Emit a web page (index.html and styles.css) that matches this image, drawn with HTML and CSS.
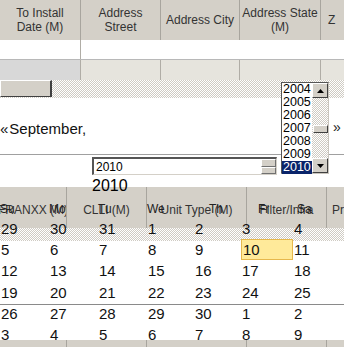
FILE: index.html
```html
<!DOCTYPE html>
<html>
<head>
<meta charset="utf-8">
<link rel="stylesheet" href="styles.css">
</head>
<body>
<div class="page">
  <div class="g1-head">
    <div class="hc c1">To Install<br>Date (M)</div>
    <div class="hc c2">Address<br>Street</div>
    <div class="hc c3">Address City</div>
    <div class="hc c4">Address State<br>(M)</div>
    <div class="hc c5 left">Z</div>
  </div>
  <div class="g1-row white">
    <div class="rc c1 bordered"></div>
    <div class="rc c2"></div>
    <div class="rc c3"></div>
    <div class="rc c4"></div>
    <div class="rc c5"></div>
  </div>
  <div class="g1-row grey">
    <div class="rc c1 first"></div>
    <div class="rc c2 bordered"></div>
    <div class="rc c3 bordered"></div>
    <div class="rc c4 bordered"></div>
    <div class="rc c5"></div>
  </div>
  <div class="hscroll"><div class="thumb"></div></div>

  <div class="cal-head"><span class="nav">«</span>September,</div>

  <div class="year-line">
    <div class="year-input">
      <span>2010</span>
      <div class="spin"><div class="sb"></div><div class="sb"></div></div>
    </div>
  </div>

  <div class="g2">
    <div class="g2-head">
      <div class="h2 k1">FRANXX (M)</div>
      <div class="h2 k2">CLLI (M)</div>
      <div class="h2 k3">Unit Type (M)</div>
      <div class="h2 k4">Filter/Infra</div>
      <div class="h2 k5 left">Pr</div>
    </div>
    <div class="hatch g2-hatch"></div>
    <div class="g2-body"><div class="g2-row"></div></div>
    <div class="g2-foot">
      <div class="f k1"></div><div class="f k2"></div><div class="f k3"></div><div class="f k4"></div><div class="f k5"></div>
    </div>

    <div class="cal">
      <div class="cap">2010</div>
      <div class="days">
        <div class="dn">Su</div><div class="dn">Mo</div><div class="dn">Tu</div><div class="dn">We</div><div class="dn">Th</div><div class="dn">Fr</div><div class="dn">Sa</div>
      </div>
      <div class="nums">
        <div>29</div><div>30</div><div>31</div><div>1</div><div>2</div><div>3</div><div>4</div>
        <div>5</div><div>6</div><div>7</div><div>8</div><div>9</div><div class="today">10</div><div>11</div>
        <div>12</div><div>13</div><div>14</div><div>15</div><div>16</div><div>17</div><div>18</div>
        <div>19</div><div>20</div><div>21</div><div>22</div><div>23</div><div>24</div><div>25</div>
        <div>26</div><div>27</div><div>28</div><div>29</div><div>30</div><div>1</div><div>2</div>
        <div>3</div><div>4</div><div>5</div><div>6</div><div>7</div><div>8</div><div>9</div>
      </div>
    </div>
  </div>

  <div class="listbox">
    <div class="items">
      <div>2004</div><div>2005</div><div>2006</div><div>2007</div><div>2008</div><div>2009</div><div class="sel">2010</div>
    </div>
    <div class="lscroll">
      <div class="btn"><svg width="7" height="4" viewBox="0 0 7 4"><polygon points="0,4 7,4 3.5,0" fill="#000"/></svg></div>
      <div class="track hatch"><div class="lthumb"></div></div>
      <div class="btn"><svg width="7" height="4" viewBox="0 0 7 4"><polygon points="0,0 7,0 3.5,4" fill="#000"/></svg></div>
    </div>
  </div>
  <div class="next">»</div>
</div>
</body>
</html>
```

FILE: styles.css
```css
* { box-sizing: border-box; }
body {
  margin: 0;
  width: 344px;
  height: 347px;
  overflow: hidden;
  background: #fff;
  font-family: "Liberation Sans", Arial, sans-serif;
  color: #000;
}
.page {
  position: relative;
  width: 344px;
  height: 347px;
  overflow: hidden;
}
.hatch {
  background-color: #fff;
  background-image: repeating-conic-gradient(#cfcbc3 0% 25%, #ffffff 0% 50%);
  background-size: 2px 2px;
}

/* top grid */
.g1-head {
  display: flex;
  height: 40px;
  background: #d4d0c8;
}
.c1 { width: 81px; }
.c2 { width: 80px; }
.c3 { width: 79px; }
.c4 { width: 81px; }
.c5 { flex: 1; }
.hc {
  flex-shrink: 0;
  display: flex;
  align-items: center;
  justify-content: center;
  text-align: center;
  font-size: 12px;
  line-height: 14px;
  color: #333;
  border-right: 1px solid #a8a59e;
  white-space: nowrap;
  overflow: hidden;
}
.hc.c5 { border-right: none; }
.left { justify-content: flex-start; padding-left: 7px; }
.g1-row {
  display: flex;
  height: 20px;
}
.g1-row.white { background: #fff; border-bottom: 1px solid #b8b8b8; }
.g1-row.grey { background: #e6e4dd; }
.rc { flex-shrink: 0; height: 100%; }
.rc.bordered { border-right: 1px solid #b0ada6; }
.rc.first { background: #d8d8d8; border-right: 1px solid #b0ada6; }

.hscroll {
  height: 18px;
  background-color: #fff;
  background-image: repeating-conic-gradient(#cfcbc3 0% 25%, #ffffff 0% 50%);
  background-size: 2px 2px;
}
.thumb {
  width: 52px;
  height: 17px;
  background: #d4d0c8;
  border-top: 1px solid #fff;
  border-left: 1px solid #fff;
  border-right: 2px solid #404040;
  border-bottom: 1px solid #404040;
}

/* calendar title */
.cal-head {
  height: 57px;
  padding-top: 22px;
  font-size: 15px;
  line-height: 18px;
  border-bottom: 1px solid #a0a0a0;
  color: #111;
}
.nav { margin-right: 1px; }
.year-line {
  padding-left: 92px;
  margin-top: 2px;
}
.year-input {
  width: 185px;
  height: 18px;
  border-top: 2px solid #555;
  border-left: 2px solid #555;
  border-right: 1px solid #d4d0c8;
  border-bottom: 1px solid #d4d0c8;
  display: flex;
  align-items: center;
  justify-content: space-between;
  font-size: 12px;
  padding-left: 2px;
  background: #fff;
}
.spin {
  display: flex;
  flex-direction: column;
  width: 15px;
  height: 15px;
}
.sb {
  flex: 1;
  background: #d4d0c8;
  border-top: 1px solid #fff;
  border-left: 1px solid #fff;
  border-right: 1px solid #707070;
  border-bottom: 1px solid #707070;
}

/* second grid */
.g2 {
  position: relative;
  margin-top: 12px;
}
.g2-head {
  display: flex;
  height: 41px;
  background: #d4d0c8;
}
.k1 { width: 67px; }
.k2 { width: 80px; }
.k3 { width: 100px; }
.k4 { width: 80px; }
.k5 { flex: 1; }
.h2 {
  flex-shrink: 0;
  display: flex;
  align-items: center;
  justify-content: center;
  font-size: 12px;
  color: #333;
  border-right: 1px solid #a8a59e;
  white-space: nowrap;
  overflow: hidden;
  padding-top: 4px;
}
.h2.k5 { border-right: none; padding-left: 5px; }
.g2-hatch { height: 13px; }
.g2-body { height: 99px; background: #fff; }
.g2-row { height: 64px; border-bottom: 1px solid #8a8a8a; }
.g2-foot {
  display: flex;
  height: 7px;
  background: #d4d0c8;
}
.f { flex-shrink: 0; height: 100%; border-right: 1px solid #a8a59e; }
.f.k5 { border-right: none; }

/* calendar overlay */
.cal {
  position: absolute;
  left: 0;
  top: -10px;
  width: 344px;
}
.cap {
  height: 18px;
  padding-left: 92px;
  font-size: 16px;
  line-height: 18px;
}
.days, .nums {
  display: grid;
  grid-template-columns: 49px 49px 49px 47px 47px 52px 51px;
}
.days {
  margin-top: 5px;
  height: 18px;
  font-size: 12px;
  line-height: 18px;
  color: #222;
}
.dn:nth-child(5) { padding-left: 15px; }
.dn:nth-child(6) { padding-left: 17px; }
.dn:nth-child(7) { padding-left: 4px; }
.nums {
  grid-auto-rows: 21.2px;
  font-size: 15px;
  line-height: 21px;
  color: #111;
}
.nums div { padding-left: 1px; }
.nums .today {
  background: #ffea9a;
  border: 1px solid #e6b84c;
  padding-left: 1px;
  line-height: 19px;
}

/* year dropdown */
.listbox {
  position: absolute;
  left: 281px;
  top: 82px;
  width: 48px;
  height: 92px;
  display: flex;
  background: #fff;
  border-top: 1px solid #555;
  border-left: 1px solid #555;
  border-right: 1px solid #c8c4bc;
  border-bottom: 1px solid #c8c4bc;
}
.items {
  width: 30px;
  display: flex;
  flex-direction: column;
  font-size: 12.5px;
  line-height: 13px;
}
.items div { height: 13px; padding-left: 1px; }
.items .sel { background: #0a246a; color: #fff; }
.lscroll {
  width: 16px;
  display: flex;
  flex-direction: column;
}
.btn {
  height: 15px;
  background: #d4d0c8;
  border-top: 1px solid #fff;
  border-left: 1px solid #fff;
  border-right: 1px solid #404040;
  border-bottom: 1px solid #404040;
  display: flex;
  align-items: center;
  justify-content: center;
}
.track {
  flex: 1;
  padding-top: 27px;
}
.lthumb {
  height: 8px;
  margin-left: 1px;
  background: #d4d0c8;
  border-top: 1px solid #fff;
  border-left: 1px solid #fff;
  border-right: 1px solid #404040;
  border-bottom: 1px solid #404040;
}
.next {
  position: absolute;
  left: 333px;
  top: 119px;
  font-size: 14px;
  line-height: 16px;
  color: #222;
}
```
